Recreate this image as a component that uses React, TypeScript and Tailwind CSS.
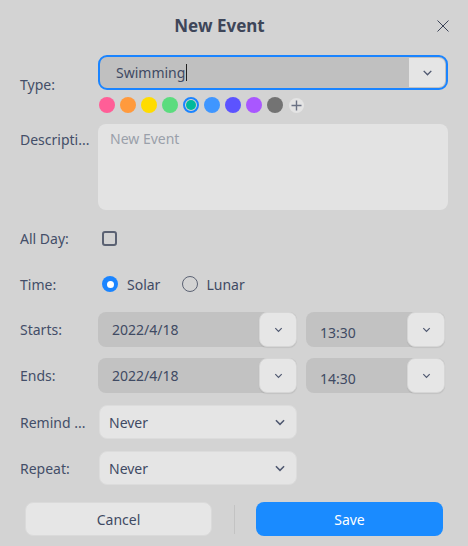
import React from "react";

const font = { fontFamily: '"Noto Sans", "Open Sans", sans-serif' };

const Chevron: React.FC<{ className?: string }> = ({ className = "w-[11px] h-[11px]" }) => (
  <svg className={className} viewBox="0 0 12 12" fill="none" stroke="#4f5870" strokeWidth="1.3">
    <path d="M2.5 4.5L6 8l3.5-3.5" />
  </svg>
);

const DateField: React.FC<{ value: string; width: string; lower?: boolean }> = ({ value, width, lower }) => (
  <div className={`flex h-[35px] items-stretch rounded-[8px] bg-[#c2c2c2] ${width}`}>
    <div className={`flex flex-1 items-center pl-[14px] text-[14px] text-[#3f4a63] ${lower ? "pt-[5px]" : ""}`}>{value}</div>
    <div className="flex w-[38px] items-center justify-center rounded-[8px] border border-[#d6d6d6] bg-[#e6e6e6] shadow-[0_1px_1px_rgba(0,0,0,0.08)]">
      <Chevron />
    </div>
  </div>
);

const Select: React.FC<{ value: string }> = ({ value }) => (
  <div className="flex h-[34px] w-[198px] items-center justify-between rounded-[8px] border border-[#dcdcdc] bg-[#e5e5e5] pl-[9px] pr-[9px] text-[14px] text-[#3f4a63]">
    <span>{value}</span>
    <Chevron className="w-[14px] h-[14px]" />
  </div>
);

const Label: React.FC<{ children: React.ReactNode }> = ({ children }) => (
  <div className="w-[78px] shrink-0 text-[14px] text-[#434e68]">{children}</div>
);

const colors = ["#ff5e97", "#ff9a3d", "#ffdc00", "#5bdc7e", "#00b99b", "#3f96ff", "#5c53ff", "#a957ff", "#737373"];

export default function App() {
  return (
    <div className="flex h-[546px] w-[468px] flex-col bg-[#d3d3d3] pl-[20px] pr-[20px]" style={font}>
      {/* Header */}
      <div className="relative flex h-[52px] items-center justify-center">
        <span className="mr-[29px] text-[17px] font-bold text-[#3e4659]">New Event</span>
        <svg className="absolute right-[-1px] top-[20px] h-[12px] w-[12px]" viewBox="0 0 12 12" stroke="#3b4357" strokeWidth="1">
          <path d="M0.5 0.5l11 11M11.5 0.5l-11 11" />
        </svg>
      </div>

      {/* Type */}
      <div className="mt-[3px] flex items-center">
        <Label>Type:</Label>
        <div className="flex flex-1 flex-col">
          <div className="flex h-[35px] w-[350px] items-stretch overflow-hidden rounded-[9px] border-2 border-[#1a84ff] bg-[#c0c0c0] p-[1px] mr-[-1px]">
            <div className="flex flex-1 items-center rounded-l-[6px] bg-[#c0c0c0] pl-[15px] text-[14px] text-[#3f4a63]">
              Swimming<span className="ml-[1px] inline-block h-[17px] w-[1px] bg-[#222]" />
            </div>
            <div className="flex w-[36px] items-center justify-center rounded-r-[6px] bg-[#e5e5e5]">
              <Chevron className="w-[13px] h-[13px]" />
            </div>
          </div>
          <div className="mt-[7px] flex items-center gap-[5px] pl-[1px]">
            {colors.map((c, i) =>
              i === 4 ? (
                <div key={c} className="flex h-[16px] w-[16px] items-center justify-center rounded-full border-2 border-[#1a84ff]">
                  <div className="h-[10px] w-[10px] rounded-full" style={{ backgroundColor: c }} />
                </div>
              ) : (
                <div key={c} className="h-[16px] w-[16px] rounded-full" style={{ backgroundColor: c }} />
              )
            )}
            <div className="ml-[1px] flex h-[15px] w-[15px] items-center justify-center rounded-full bg-[#e4e4e4]">
              <svg className="h-[11px] w-[11px]" viewBox="0 0 11 11" stroke="#6a7184" strokeWidth="1.4">
                <path d="M5.5 0.5v10M0.5 5.5h10" />
              </svg>
            </div>
          </div>
        </div>
      </div>

      {/* Description */}
      <div className="mt-[11px] flex">
        <div className="w-[78px] shrink-0 pt-[5px] text-[14px] text-[#434e68]">Descripti...</div>
        <div className="h-[86px] w-[350px] rounded-[8px] bg-[#e3e3e3] pl-[12px] pt-[4px] text-[14px] text-[#9aa0aa]">New Event</div>
      </div>

      {/* All Day */}
      <div className="mt-[10px] flex h-[36px] items-center">
        <Label>All Day:</Label>
        <div className="ml-[4px] h-[15px] w-[15px] rounded-[3px] border-2 border-[#5b6273]" />
      </div>

      {/* Time */}
      <div className="mt-[10px] flex h-[36px] items-center">
        <Label>Time:</Label>
        <div className="ml-[4px] flex items-center">
          <div className="flex h-[16px] w-[16px] items-center justify-center rounded-full bg-[#1a84ff]">
            <div className="h-[7px] w-[7px] rounded-full bg-white" />
          </div>
          <span className="ml-[9px] text-[14px] text-[#3f4a63]">Solar</span>
          <div className="ml-[22px] h-[16px] w-[16px] rounded-full border border-[#5b6273]" />
          <span className="ml-[8px] text-[14px] text-[#3f4a63]">Lunar</span>
        </div>
      </div>

      {/* Starts */}
      <div className="mt-[10px] flex items-center">
        <Label>Starts:</Label>
        <DateField value="2022/4/18" width="w-[199px]" />
        <div className="ml-[9px]">
          <DateField value="13:30" width="w-[139px]" lower />
        </div>
      </div>

      {/* Ends */}
      <div className="mt-[11px] flex items-center">
        <Label>Ends:</Label>
        <DateField value="2022/4/18" width="w-[199px]" />
        <div className="ml-[9px]">
          <DateField value="14:30" width="w-[139px]" lower />
        </div>
      </div>

      {/* Remind */}
      <div className="mt-[12px] flex items-center">
        <div className="w-[79px] shrink-0 text-[14px] text-[#434e68]">Remind ...</div>
        <Select value="Never" />
      </div>

      {/* Repeat */}
      <div className="mt-[12px] flex items-center">
        <div className="w-[79px] shrink-0 text-[14px] text-[#434e68]">Repeat:</div>
        <Select value="Never" />
      </div>

      {/* Buttons */}
      <div className="mt-[17px] flex items-center pl-[5px]">
        <button className="h-[34px] w-[187px] rounded-[8px] border border-[#dadada] bg-[#e6e6e6] text-[14px] text-[#3f4a63]">Cancel</button>
        <div className="ml-[22px] mr-[21px] h-[29px] w-[1px] bg-[#c3c3c3]" />
        <button className="h-[34px] w-[187px] rounded-[8px] bg-[#1a8bff] text-[14px] text-white">Save</button>
      </div>
    </div>
  );
}
